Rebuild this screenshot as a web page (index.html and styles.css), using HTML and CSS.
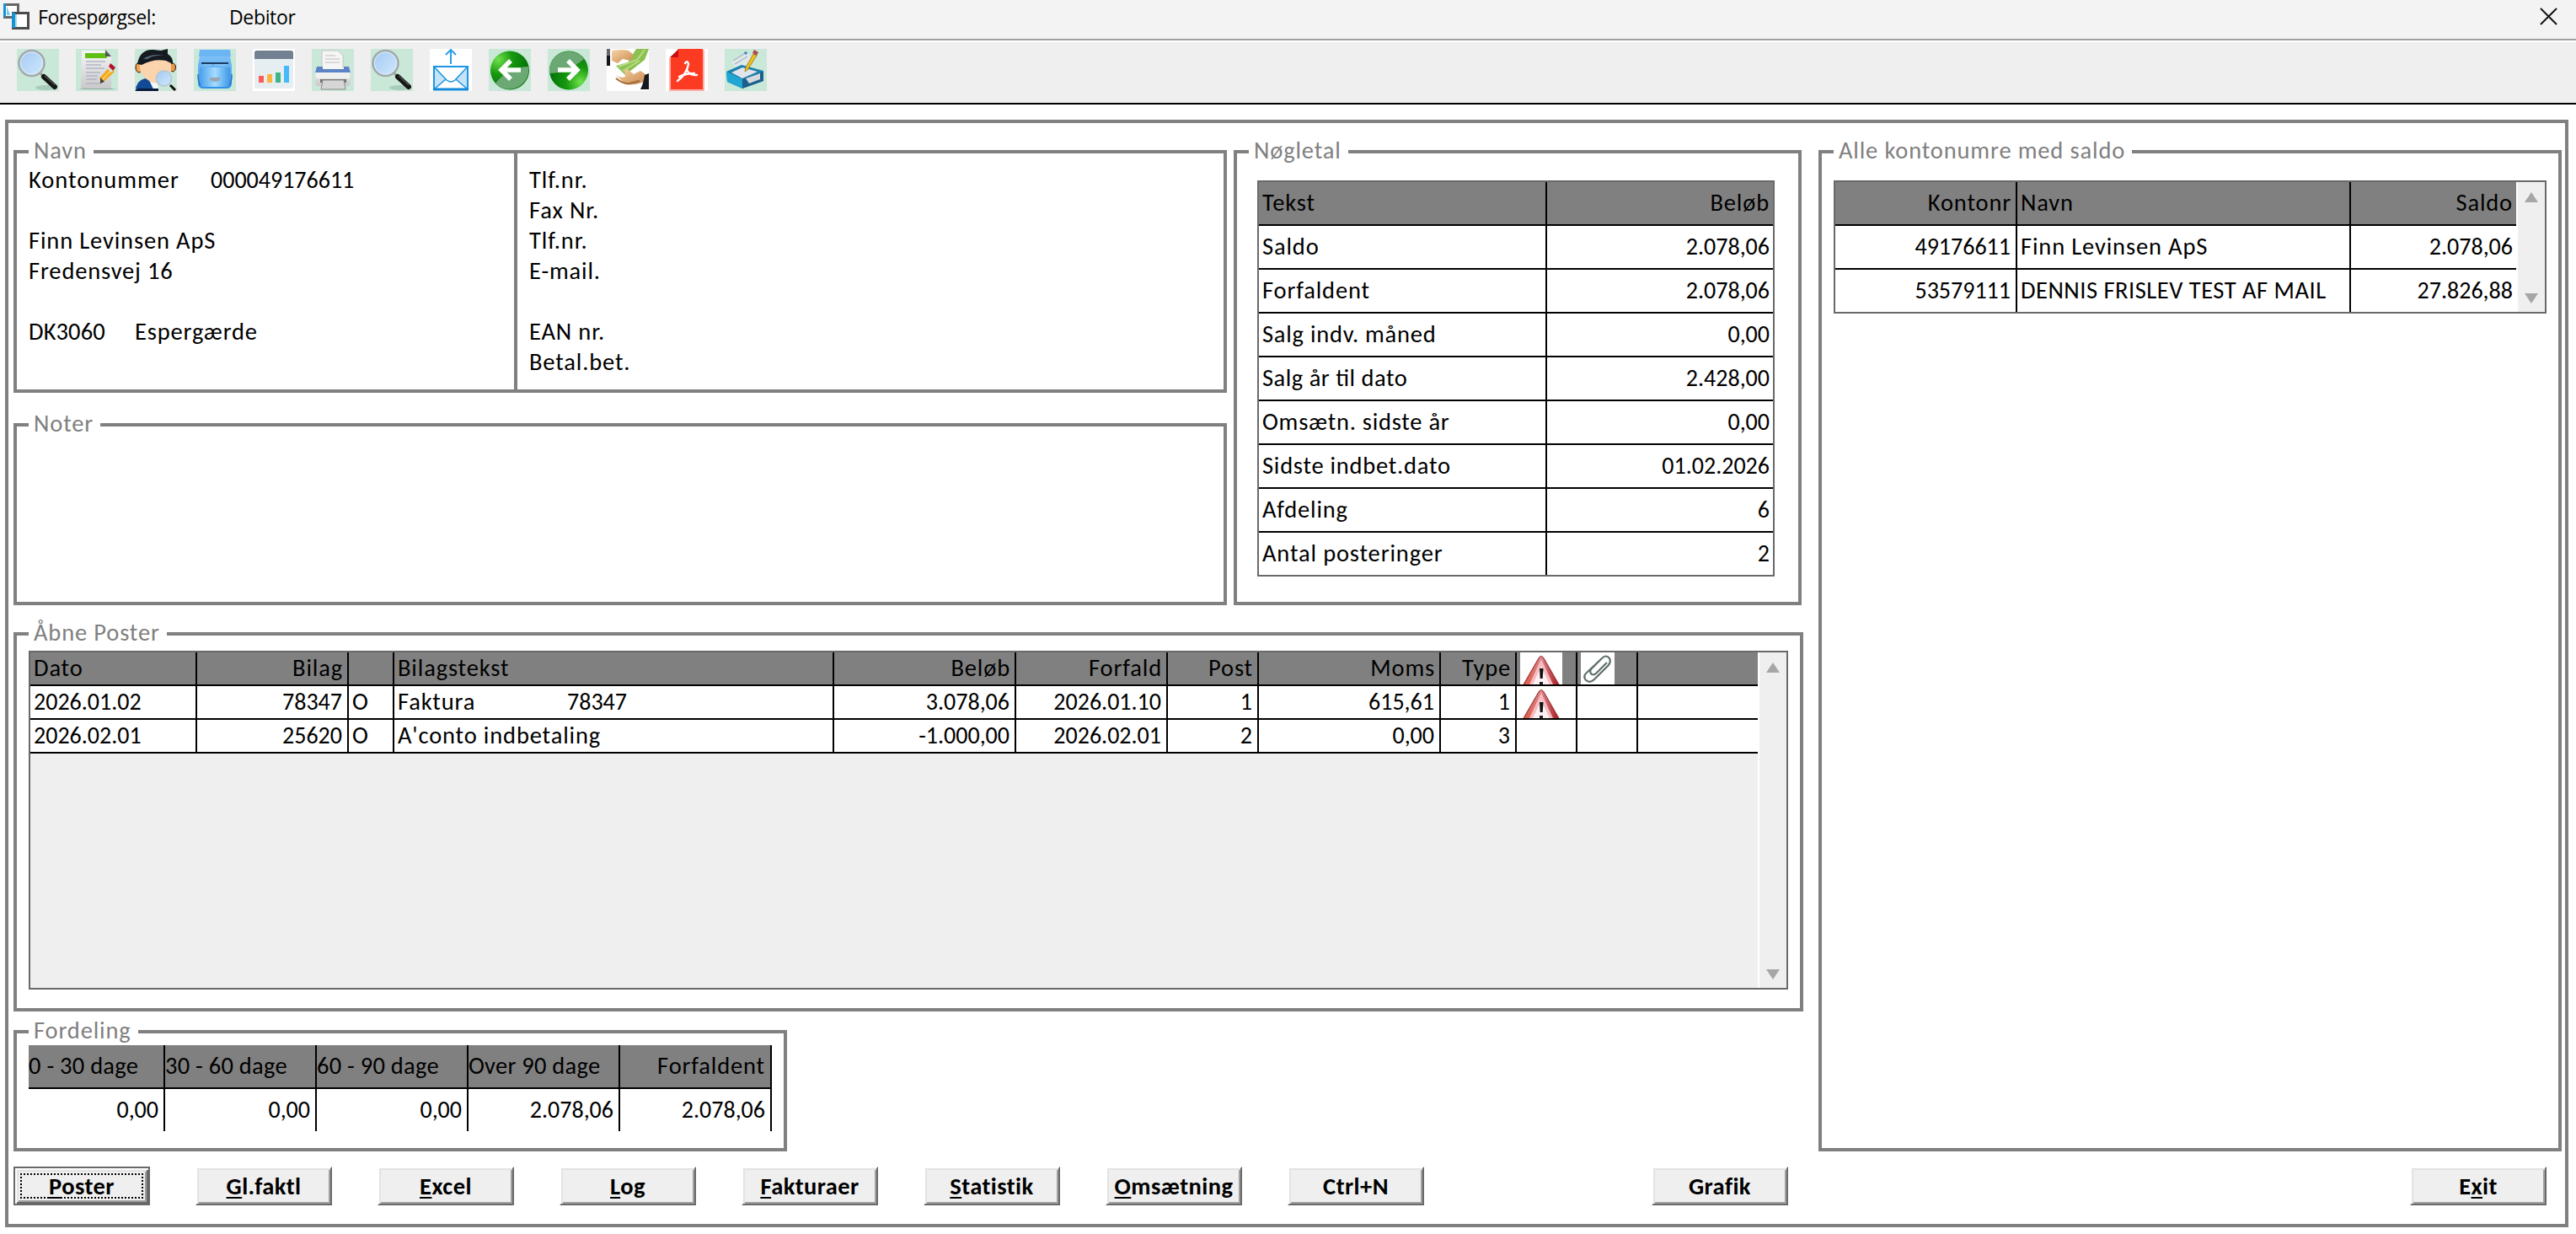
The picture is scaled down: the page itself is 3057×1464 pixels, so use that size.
FILE: index.html
```html
<!DOCTYPE html>
<html lang="da">
<head>
<meta charset="utf-8">
<title>Forespørgsel: Debitor</title>
<link rel="stylesheet" href="styles.css">
</head>
<body>
<svg class="defs" width="0" height="0" aria-hidden="true">
  <defs>
    <linearGradient id="lens" x1="0" y1="0" x2="1" y2="1"><stop offset="0" stop-color="#a3c9f3"/><stop offset="1" stop-color="#d0e9fd"/></linearGradient>
    <linearGradient id="paper" x1="0" y1="0" x2="0" y2="1"><stop offset="0" stop-color="#f6f6f6"/><stop offset="1" stop-color="#c9c9cb"/></linearGradient>
    <linearGradient id="drawer" x1="0" y1="0" x2="0" y2="1"><stop offset="0" stop-color="#7fc0f6"/><stop offset=".55" stop-color="#55a9f0"/><stop offset="1" stop-color="#2f8fe6"/></linearGradient>
    <linearGradient id="drawer-front" x1="0" y1="0" x2="1" y2="0"><stop offset="0" stop-color="#4a9fea"/><stop offset=".5" stop-color="#a4dcff"/><stop offset="1" stop-color="#3f97e6"/></linearGradient>
    <radialGradient id="ball-l" cx=".2" cy=".22" r=".75"><stop offset="0" stop-color="#6fe24c"/><stop offset=".5" stop-color="#17980f"/><stop offset="1" stop-color="#04760a"/></radialGradient>
    <radialGradient id="ball-r" cx=".8" cy=".8" r=".75"><stop offset="0" stop-color="#6fe24c"/><stop offset=".5" stop-color="#17980f"/><stop offset="1" stop-color="#04760a"/></radialGradient>
    <linearGradient id="warn" x1="0" y1="0" x2="1" y2="0"><stop offset="0" stop-color="#e0553c"/><stop offset=".5" stop-color="#d98a8e"/><stop offset="1" stop-color="#a8141a"/></linearGradient>
    <linearGradient id="skin" x1="0" y1="0" x2="1" y2="1"><stop offset="0" stop-color="#f6d3a6"/><stop offset="1" stop-color="#c98a4e"/></linearGradient>
    <symbol id="search" viewBox="0 0 50 50">
      <rect width="50" height="50" fill="#c9e8d8"/>
      <ellipse cx="35" cy="46" rx="13" ry="3" fill="#a9cbbb"/>
      <path d="M28 29l5 5" stroke="#9a9a9a" stroke-width="3"/>
      <path d="M32 33l13 12" stroke="#151515" stroke-width="6" stroke-linecap="round"/>
      <path d="M33 32l12 11" stroke="#777" stroke-width="1"/>
      <circle cx="17.500" cy="17" r="15" fill="url(#lens)" stroke="#a3a9ab" stroke-width="2.500"/>
      <circle cx="17.500" cy="17" r="13.200" fill="none" stroke="#e2eff6" stroke-width="1"/>
    </symbol>
    <symbol id="warning" viewBox="0 0 50 38">
      <rect width="50" height="38" fill="#fff"/>
      <path d="M3 40L22 7q3-5 6 0L47 40z" fill="url(#warn)"/>
      <path d="M25 8L11 38h28z" fill="#f6bcc2"/>
      <path d="M25 17L15 38h20z" fill="#fdf0f2"/>
      <path d="M3 40L22 7q3-5 6 0L47 40" fill="none" stroke="#a3343a" stroke-width="1.200"/>
      <path d="M23 19h4.500l-.8 12h-3z" fill="#111"/><rect x="23" y="35" width="4" height="3" fill="#222"/>
    </symbol>
  </defs>
</svg>

<header class="titlebar">
  <svg class="app-icon" viewBox="0 0 32 32"><rect x="1.500" y="1.500" width="16" height="15" fill="#fff" stroke="#666" stroke-width="3"/><path d="M1.500 0v16" stroke="#1592d2" stroke-width="3"/><path d="M4 3v11h4z" fill="#7cc6ee"/><rect x="11.500" y="11.500" width="18" height="18" fill="#fff" stroke="#4b4b4b" stroke-width="3"/><path d="M12 11v18" stroke="#1592d2" stroke-width="4"/><path d="M14 13v15h2V13z" fill="#a8d9f3"/></svg>
  <span class="title-kind">Forespørgsel:</span>
  <span class="title-name">Debitor</span>
  <svg class="close" viewBox="0 0 22 22"><path d="M1 1l20 20M21 1L1 21" stroke="#111" stroke-width="2" fill="none"/></svg>
</header>

<nav class="toolbar">
  <svg viewBox="0 0 50 50"><use href="#search"/></svg>
  <svg viewBox="0 0 50 50"><rect width="50" height="50" fill="#c9e8d8"/><path d="M3 48q22-5 45 0z" fill="#8fa79b"/><path d="M7 2h29l6 7v38H6z" fill="url(#paper)"/><path d="M11 5h25l1 6H11z" fill="#5fbf12"/><path d="M35 1l7 8h-7z" fill="#555"/><path d="M12 15h23M12 19h18M12 23h22M12 28h17M12 32h14M12 36h13M12 41h18" stroke="#aeb7c4" stroke-width="1.600"/><path d="M40 21l6 6-13 12-5-4z" fill="#f2a81d"/><path d="M43 24L31 37" stroke="#ffd257" stroke-width="1.500"/><path d="M41 17l6 5-3 4-5-5z" fill="#b3122a"/><path d="M39 21l5 5-2 2-5-5z" fill="#ddd"/><path d="M29 34l5 5-5 2z" fill="#443d3a"/></svg>
  <svg viewBox="0 0 50 50"><rect width="50" height="50" fill="#c9e8d8"/><path d="M1 50q0-12 11-15l8 3 7 12z" fill="#134a96"/><path d="M17 37l6 13h6l-4-14z" fill="#f4f8ff"/><path d="M0 50l4-3h24v3z" fill="#0b1b3b"/><ellipse cx="5" cy="22" rx="4" ry="6" fill="#f0a552" stroke="#2a1a10"/><ellipse cx="45" cy="22" rx="3.500" ry="5" fill="#e79a48" stroke="#2a1a10"/><path d="M6 14q19-8 37 0v12q-3 10-11 14-9 2-15-2Q7 31 6 24z" fill="#fbd3ad"/><path d="M3 18Q6 0 22 1l9 1 8-2v6q7 4 6 12l-8-4q-14-3-29 5z" fill="#141a20"/><path d="M10 12q10-7 25-4-12-1-20 4z" fill="#54677a"/><path d="M42 43l6 6" stroke="#111" stroke-width="3"/><circle cx="34.500" cy="35" r="9" fill="url(#lens)" stroke="#b7c9d6" stroke-width="1.800"/></svg>
  <svg viewBox="0 0 50 50"><rect width="50" height="50" fill="#c9e8d8"/><path d="M7 1h36l1 8H6z" fill="#6cb5f3"/><path d="M7 9h36l2 10v22q0 5-5 6H10q-5-1-5-6V19z" fill="url(#drawer)"/><path d="M7 22h36v18q0 4-4 5H11q-4-1-4-5z" fill="url(#drawer-front)"/><path d="M9 17h32" stroke="#1c3b60" stroke-width="2"/><path d="M12 19h9M25 19h14" stroke="#9ed1f8" stroke-width="1.200"/><path d="M19 34h12v3q-6 4-12 0z" fill="#9aa7b3"/><path d="M5 30q0 10 3 13M45 30q0 10-3 13" stroke="#1f74c9" stroke-width="1.500" fill="none"/></svg>
  <svg viewBox="0 0 50 50"><rect width="50" height="50" fill="#fff"/><rect x="2" y="2" width="46" height="45" rx="3" fill="#e7eef1"/><path d="M2 12V5q0-3 3-3h40q3 0 3 3v7z" fill="#738091"/><rect x="7" y="32" width="6" height="8" fill="#fb5f54"/><rect x="17" y="30" width="6" height="10" fill="#fdb23c"/><rect x="27" y="28" width="6" height="12" fill="#3cb58a"/><rect x="37" y="20" width="6" height="20" fill="#46b9fb"/></svg>
  <svg viewBox="0 0 50 50"><rect width="50" height="50" fill="#c9e8d8"/><path d="M12 2h19l6 6v15H12z" fill="#f5f5f5" stroke="#c6c6c6"/><path d="M16 8h12M16 12h17M16 16h17" stroke="#cfcfcf" stroke-width="1.400"/><rect x="4" y="22" width="42" height="22" rx="4" fill="url(#paper)"/><path d="M6 21h7v3h25v-3h6l2 7H4z" fill="#5b83c6"/><rect x="5" y="28" width="40" height="7" fill="#f0f0f0"/><rect x="10" y="36" width="31" height="4" fill="#6f6f6f"/><path d="M13 37h25l2 11H11z" fill="#d6d6d6" stroke="#8b8b8b"/></svg>
  <svg viewBox="0 0 50 50"><use href="#search"/></svg>
  <svg viewBox="0 0 50 50"><rect width="50" height="50" fill="#fff"/><path d="M25 18V2M19 7l6-6 6 6" fill="none" stroke="#2c9fe6" stroke-width="2"/><rect x="5" y="21" width="40" height="27" fill="#c6e3f8" stroke="#1d97e3" stroke-width="2"/><path d="M6 22h38L30 37q-5 4-10 0z" fill="#fff"/><path d="M6 47l14-11q5 5 10 0l14 11z" fill="#fff"/><path d="M5 21l15 16q5 4 10 0l15-16M5 48l14-12M45 48L31 36" fill="none" stroke="#1d97e3" stroke-width="1.600"/><path d="M4 48h42" stroke="#1388d8" stroke-width="3"/></svg>
  <svg viewBox="0 0 50 50"><rect width="50" height="50" fill="#c9e8d8"/><circle cx="25" cy="25.500" r="23" fill="url(#ball-l)"/><path d="M8 41Q22 22 47 21a23 23 0 0 1-39 20z" fill="#6ba873"/><path d="M26 14L15 25l11 11M15 25h23" fill="none" stroke="#fff" stroke-width="5.500"/></svg>
  <svg viewBox="0 0 50 50"><rect width="50" height="50" fill="#c9e8d8"/><circle cx="25" cy="25.500" r="23" fill="url(#ball-r)"/><path d="M2 29a23 23 0 0 1 41-17Q22 29 2 29z" fill="#6ba873"/><path d="M24 14l11 11-11 11M35 25H12" fill="none" stroke="#fff" stroke-width="5.500"/></svg>
  <svg viewBox="0 0 50 50"><rect width="50" height="50" fill="#fff"/><rect width="4" height="20" fill="#15161c"/><rect width="4" height="8" fill="#66666c"/><path d="M35 0h15l-5 13-23 18-11-11 14-4z" fill="#8cc152"/><path d="M14 21l22-8 9-12M19 26l20-12" stroke="#b8dc84" stroke-width="2" fill="none"/><path d="M6 2q12-2 20 0l6 5-3 7-10-2-6 5-7-3z" fill="url(#skin)"/><path d="M10 31q6 4 12 2l-1-7q3-4 6 0l5 4 8-4 6 4-2 9q-12 5-22 3-3-4-12-11z" fill="url(#skin)"/><path d="M11 35q9 7 16 6l12-3" stroke="#a5693a" stroke-width="2" fill="none"/><path d="M45 31l5-2v19H40q4-8 5-17z" fill="#17181d"/></svg>
  <svg viewBox="0 0 50 50"><rect width="50" height="50" fill="#fff"/><path d="M15 0h28q3 0 3 3v47H4V11z" fill="#fcb0a8"/><path d="M15 0h28q1 0 1 2v46H6V11z" fill="#fd3a22"/><path d="M15 1v9H5z" fill="#c40f14"/><path d="M23 17q3-4 4 1-2 12-13 20M25 25q4 7 12 6M16 33q8-4 18-4" fill="none" stroke="#fff" stroke-width="2.400" stroke-linecap="round"/></svg>
  <svg viewBox="0 0 50 50"><rect width="50" height="50" fill="#c9e8d8"/><path d="M8 15L26 4l8 8-18 14z" fill="#dfe9ea"/><path d="M10 14l13-8M12 18l15-9" stroke="#a9b4bf" stroke-width="1.300"/><path d="M2 27l18-8 26 7v12L21 47 3 39z" fill="#1b7fae"/><path d="M2 27l19 9v11L3 39z" fill="#20a6d2"/><path d="M21 36l25-9v11l-25 9z" fill="#1c5f8c"/><path d="M8 28l13-6 18 5-18 8z" fill="#dfe5ea"/><path d="M25 35l17-6v7l-13 5z" fill="#d4d9de"/><path d="M34 6l4 2-11 17-3 2 1-5z" fill="#eebd1e" stroke="#9b7612" stroke-width=".8"/><path d="M35 1l5 3-2 4-5-3z" fill="#b04a50"/><circle cx="25" cy="5" r="1.800" fill="#3d7fc4"/></svg>
</nav>

<main class="frame">
  <div class="left">
    <div class="top-row">
      <div class="stack">
        <section class="panel customer"><h2 class="legend">Navn</h2>
          <div class="lines address">
            <p><span class="label-account">Kontonummer</span><span class="num">000049176611</span></p>
            <p></p>
            <p>Finn Levinsen ApS</p>
            <p>Fredensvej 16</p>
            <p></p>
            <p><span class="label-zip">DK3060</span><span>Espergærde</span></p>
          </div>
          <div class="lines contact"><p>Tlf.nr.</p><p>Fax Nr.</p><p>Tlf.nr.</p><p>E-mail.</p><p></p><p>EAN nr.</p><p>Betal.bet.</p></div>
        </section>
        <section class="panel notes"><h2 class="legend">Noter</h2></section>
      </div>
      <section class="panel figures"><h2 class="legend">Nøgletal</h2>
        <table class="grid figures-grid">
          <colgroup><col class="c-342"><col></colgroup>
          <tr><th>Tekst</th><th class="r">Beløb</th></tr>
          <tr><td>Saldo</td><td class="r num">2.078,06</td></tr>
          <tr><td>Forfaldent</td><td class="r num">2.078,06</td></tr>
          <tr><td class="snug">Salg indv. måned</td><td class="r num">0,00</td></tr>
          <tr><td class="liga">Salg år til dato</td><td class="r num">2.428,00</td></tr>
          <tr><td class="snug">Omsætn. sidste år</td><td class="r num">0,00</td></tr>
          <tr><td class="snug">Sidste indbet.dato</td><td class="r num">01.02.2026</td></tr>
          <tr><td>Afdeling</td><td class="r num">6</td></tr>
          <tr><td>Antal posteringer</td><td class="r num">2</td></tr>
        </table>
      </section>
    </div>

    <section class="panel open-items"><h2 class="legend">Åbne Poster</h2>
      <div class="scroll-box items-box">
        <table class="grid items-grid">
          <colgroup><col class="c-198"><col class="c-180"><col class="c-54"><col class="c-522"><col class="c-216"><col class="c-180"><col class="c-108"><col class="c-216"><col class="c-90"><col class="c-72"><col class="c-72"><col></colgroup>
          <tr><th>Dato</th><th class="r">Bilag</th><th></th><th>Bilagstekst</th><th class="r">Beløb</th><th class="r">Forfald</th><th class="r">Post</th><th class="r">Moms</th><th class="r">Type</th><th class="icon"><svg class="warn" viewBox="0 0 50 38"><use href="#warning"/></svg></th><th class="icon"><svg class="clip" viewBox="0 0 40 38"><rect width="40" height="38" fill="#fff"/><path d="M12 20L25 7q5-5 9 0 2 4-1 8L16 32q-5 5-10 1-4-5 1-9L23 9M12 20q-2 4 1 6 3 1 5-1L31 12" fill="none" stroke="#5f6f68" stroke-width="2.200"/></svg></th><th></th></tr>
          <tr><td class="num">2026.01.02</td><td class="r num">78347</td><td>O</td><td><span class="item-type">Faktura</span><span class="num">78347</span></td><td class="r num">3.078,06</td><td class="r num">2026.01.10</td><td class="r num">1</td><td class="r num">615,61</td><td class="r num">1</td><td class="icon"><svg class="warn" viewBox="0 0 50 38"><use href="#warning"/></svg></td><td></td><td></td></tr>
          <tr><td class="num">2026.02.01</td><td class="r num">25620</td><td>O</td><td>A'conto indbetaling</td><td class="r num">-1.000,00</td><td class="r num">2026.02.01</td><td class="r num">2</td><td class="r num">0,00</td><td class="r num">3</td><td></td><td></td><td></td></tr>
        </table>
        <div class="scrollbar"><i class="up"></i><i class="down"></i></div>
      </div>
    </section>

    <section class="panel aging"><h2 class="legend">Fordeling</h2>
      <table class="grid aging-grid">
        <colgroup><col class="c-162"><col class="c-180"><col class="c-180"><col class="c-180"><col class="c-180"></colgroup>
        <tr><th>0 - 30 dage</th><th>30 - 60 dage</th><th>60 - 90 dage</th><th>Over 90 dage</th><th class="r">Forfaldent</th></tr>
        <tr><td class="r num">0,00</td><td class="r num">0,00</td><td class="r num">0,00</td><td class="r num">2.078,06</td><td class="r num">2.078,06</td></tr>
      </table>
    </section>
  </div>

  <section class="panel accounts"><h2 class="legend">Alle kontonumre med saldo</h2>
    <div class="scroll-box accounts-box">
      <table class="grid accounts-grid">
        <colgroup><col class="c-216"><col class="c-396"><col></colgroup>
        <tr><th class="r">Kontonr</th><th>Navn</th><th class="r">Saldo</th></tr>
        <tr><td class="r num">49176611</td><td>Finn Levinsen ApS</td><td class="r num">2.078,06</td></tr>
        <tr><td class="r num">53579111</td><td class="caps">DENNIS FRISLEV TEST AF MAIL</td><td class="r num">27.826,88</td></tr>
      </table>
      <div class="scrollbar"><i class="up"></i><i class="down"></i></div>
    </div>
  </section>

  <footer class="actions">
    <button class="btn focused"><u>P</u>oster</button>
    <button class="btn"><u>G</u>l.faktl</button>
    <button class="btn"><u>E</u>xcel</button>
    <button class="btn"><u>L</u>og</button>
    <button class="btn"><u>F</u>akturaer</button>
    <button class="btn"><u>S</u>tatistik</button>
    <button class="btn"><u>O</u>msætning</button>
    <button class="btn">Ctrl+N</button>
    <button class="btn chart">Grafik</button>
    <button class="btn exit">E<u>x</u>it</button>
  </footer>
</main>
</body>
</html>
```
FILE: styles.css
```css
* { box-sizing: border-box; }
body {
  margin: 0;
  width: 3057px;
  height: 1464px;
  overflow: hidden;
  background: #fff;
  color: #000;
  font-family: Carlito, Lato, sans-serif;
  font-size: 28.5px;
  letter-spacing: .85px;
  font-feature-settings: "liga" 1;
  white-space: nowrap;
}
p, h2 { margin: 0; font-size: inherit; font-weight: normal; }
svg { display: block; }
.defs { position: absolute; }
.num { font-size: 28px; letter-spacing: 0; }
.caps { letter-spacing: .5px; }
.liga { letter-spacing: .5px; }
.snug { letter-spacing: .75px; }

/* title bar */
.titlebar {
  display: flex;
  align-items: center;
  height: 50px;
  padding: 0 22px 9px 4px;
  background: #f3f3f3;
  border-bottom: 2px solid #fff;
  box-shadow: inset 0 -2px #9f9f9f;
  font-family: "Open Sans", sans-serif;
  font-size: 23px;
  letter-spacing: -.35px;
}
.app-icon { width: 32px; height: 32px; margin-right: 9px; }
.title-kind { width: 227px; }
.close { width: 21px; height: 21px; margin-left: auto; }

/* toolbar */
.toolbar {
  display: flex;
  gap: 20px;
  height: 74px;
  padding: 8px 20px 0;
  background: #efefef;
  border-bottom: 2px solid #000;
}
.toolbar svg { width: 50px; height: 50px; }

/* outer frame */
.frame {
  display: grid;
  grid-template-columns: 2124px 882px;
  grid-template-rows: 1188px 46px;
  column-gap: 18px;
  row-gap: 18px;
  width: 3042px;
  height: 1314px;
  margin: 18px 0 0 6px;
  padding: 32px 0 0 6px;
  border: 4px solid #808080;
}
.panel { position: relative; border: 4px solid #808080; }
.legend {
  position: absolute;
  top: -18px;
  left: 14px;
  padding: 0 8px 0 6px;
  background: #fff;
  color: #808080;
  line-height: 30px;
}
.left { display: flex; flex-direction: column; }
.top-row { display: flex; gap: 8px; height: 540px; margin-bottom: 32px; }
.stack { display: flex; flex-direction: column; gap: 36px; width: 1440px; }
.customer { display: flex; height: 288px; }
.notes { height: 216px; }
.lines { padding: 14px 0 0 14px; line-height: 36px; }
.lines p { display: flex; height: 36px; }
.address { flex: none; width: 594px; border-right: 4px solid #808080; }
.label-account { width: 216px; letter-spacing: 1px; }
.label-zip { width: 126px; letter-spacing: .1px; }

/* grids */
.grid { table-layout: fixed; border-spacing: 0; background: #fff; }
.grid th, .grid td {
  height: 52px;
  padding: 0 6px 0 4px;
  border-right: 2px solid #000;
  border-bottom: 2px solid #000;
  line-height: 36px;
  font-weight: normal;
  text-align: left;
  overflow: hidden;
}
.grid th { background: #808080; }
.grid .r { text-align: right; }
.grid th.r { padding-right: 5px; }
.grid tr > :last-child { border-right: 0; padding-right: 4px; }
.c-54 { width: 54px; } .c-72 { width: 72px; } .c-90 { width: 90px; }
.c-108 { width: 108px; } .c-162 { width: 162px; } .c-180 { width: 180px; }
.c-198 { width: 198px; } .c-216 { width: 216px; } .c-342 { width: 342px; }
.c-396 { width: 396px; } .c-522 { width: 522px; }

.figures { width: 674px; padding: 32px 0 0 24px; }
.figures-grid { width: 614px; border: 2px solid #696969; }
.figures-grid tr:last-child td, .accounts-grid tr:last-child td { border-bottom: 0; height: 50px; }

.scroll-box { display: flex; justify-content: space-between; align-items: flex-start; border: 2px solid #696969; }
.scrollbar {
  display: flex;
  flex-direction: column;
  justify-content: space-between;
  align-items: center;
  align-self: stretch;
  width: 34px;
  padding: 12px 0 10px;
  background: #efefef;
  border-left: 2px solid #fff;
}
.up, .down { border: 8px solid transparent; border-top-width: 0; border-bottom: 12px solid #a6a6a6; }
.down { border-bottom: 0; border-top: 12px solid #a6a6a6; }

.open-items { height: 450px; margin-bottom: 22px; padding: 18px 0 0 14px; }
.items-box { width: 2088px; height: 402px; background: #efefef; }
.items-grid { width: 2050px; }
.items-grid th, .items-grid td { height: 40px; }
.items-grid .icon { padding: 0 0 0 4px; }
.warn { width: 50px; height: 38px; }
.clip { width: 40px; height: 38px; }
.item-type { display: inline-block; width: 201px; }

.aging { width: 918px; height: 144px; padding: 14px 0 0 14px; }
.aging-grid { width: 882px; }
.aging-grid th { padding-left: 0; letter-spacing: .25px; }
.aging-grid th.r { letter-spacing: .85px; }
.aging-grid td { border-bottom: 0; height: 50px; }
.aging-grid tr > :last-child { border-right: 2px solid #000; padding-right: 6px; }

.accounts { padding: 32px 0 0 14px; }
.accounts-box { width: 846px; height: 158px; }
.accounts-grid { width: 808px; }

/* buttons */
.actions { grid-column: 1 / -1; display: flex; gap: 54px; }
.btn {
  width: 162px;
  height: 46px;
  padding: 1px 0 0;
  border: 2px solid;
  border-color: #fff #696969 #696969 #fff;
  box-shadow: inset 2px 2px #e3e3e3, inset -2px -2px #a0a0a0;
  background: #efefef;
  color: #000;
  font: bold 28.5px/36px Carlito, Lato, sans-serif;
  letter-spacing: .45px;
}
.btn u { text-decoration-thickness: 2px; text-underline-offset: 3px; }
.focused {
  border-color: #696969;
  box-shadow: inset 2px 2px #fff, inset -2px -2px #696969, inset 4px 4px #e3e3e3, inset -4px -4px #a0a0a0;
  outline: 2px dotted #000;
  outline-offset: -10px;
}
.chart { margin-left: 216px; }
.exit { margin-left: 684px; }
```
